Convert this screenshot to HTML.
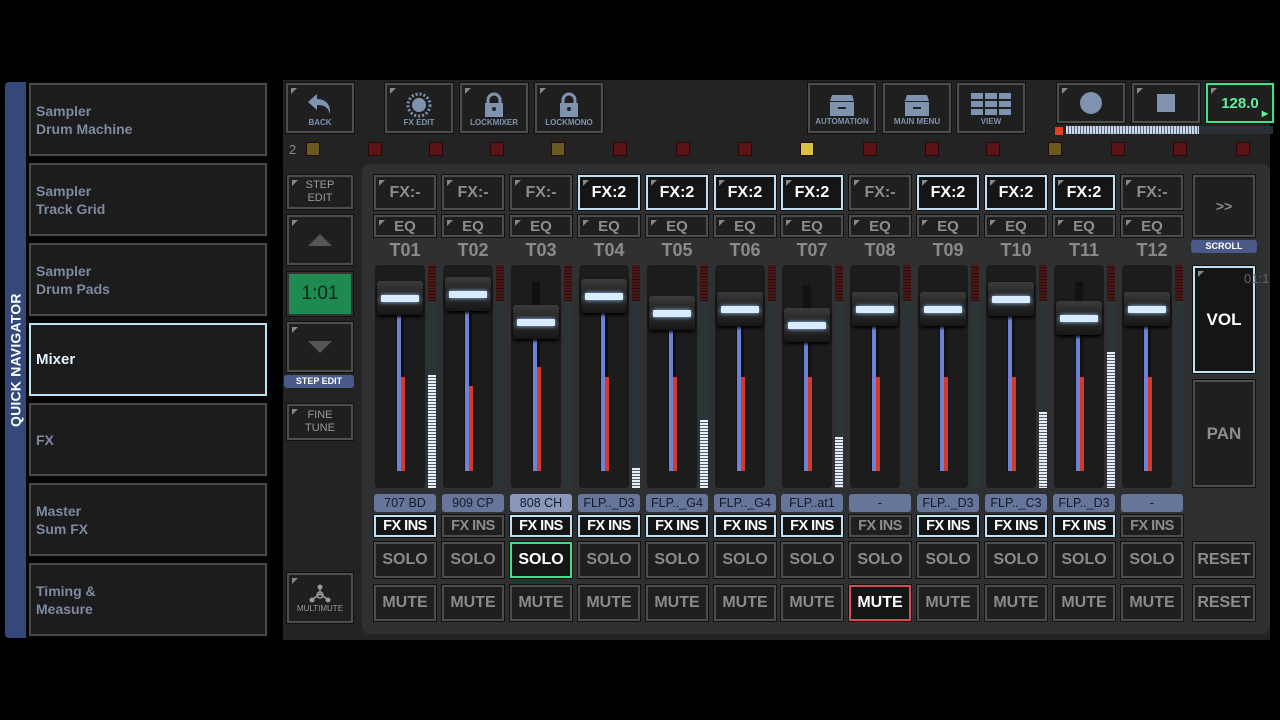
<!DOCTYPE html>
<html><head><meta charset="utf-8"><style>
*{box-sizing:border-box;margin:0;padding:0}
body{width:1280px;height:720px;background:#000;position:relative;overflow:hidden;font-family:"Liberation Sans",sans-serif;font-weight:bold}
.a{position:absolute}
.side{left:5px;top:82px;width:265px;height:556px;background:#050505;border-radius:4px 0 0 4px}
.strip{left:5px;top:82px;width:21px;height:556px;background:#34497a;border-radius:4px 0 0 4px}
.qn{left:5px;top:260px;width:21px;height:200px;color:#fff;font-size:14px;writing-mode:vertical-rl;transform:rotate(180deg);display:flex;align-items:center;justify-content:center;letter-spacing:0.2px}
.nav{left:29px;width:238px;height:73px;background:#1c1c1c;border:2px solid #4a4a4a;color:#7d8aa0;font-size:14px;padding-left:5px;display:flex;align-items:center;line-height:18px}
.nav.on{border-color:#bfe0f0;color:#e6f4ff;font-size:15px}
.main{left:283px;top:80px;width:987px;height:560px;background:#232323}
.inner{left:362px;top:164px;width:908px;height:470px;background:#2f3031;border-radius:8px}
.b{position:absolute;background:#1f1f1f;border:2px solid #4d4d4d;color:#8d8d8d;display:flex;align-items:center;justify-content:center;text-align:center;box-shadow:0 0 0 1px #111}
.b::before{content:"";position:absolute;left:3px;top:3px;border-left:6px solid #888;border-bottom:6px solid transparent}
.nb::before{display:none}
.tb{top:83px;height:50px;width:68px;flex-direction:column;font-size:8px;color:#7f93b0;padding-top:2px}
.col{position:absolute;top:0;width:62px;height:720px}
.col>*{position:absolute}
.fx{top:175px;left:0;width:62px;height:35px;font-size:16px}
.fx.on{border-color:#bfe0f0;color:#fff;background:#151515}
.eq{top:215px;left:0;width:62px;height:22px;font-size:15px}
.lbl{top:240px;left:0;width:62px;text-align:center;color:#8a8a8a;font-size:18px;font-weight:bold}
.fb{top:265px;left:1px;width:50px;height:223px;background:#1c1c1c;border-radius:4px}
.mt{top:265px;left:54px;width:8px;height:223px;background:#2b3538}
.mt::before{content:"";position:absolute;left:0;top:0;width:8px;height:36px;background:repeating-linear-gradient(#4a1616 0 2px,#2a1010 2px 3px)}
.mf{left:54px;width:8px;background:repeating-linear-gradient(#e6eef8 0 2px,#55606a 2px 3px);bottom:232px}
.tr{left:22px;width:8px;top:calc(var(--c) + 17px);height:calc(471px - var(--c) - 17px);background:#111;border-radius:3px}
.tr::before{content:"";position:absolute;left:1px;top:0;width:4px;bottom:0;background:#6f82d8}
.rd{left:27px;width:4px;top:377px;height:94px;background:#d33a2a}
.cap{left:3px;width:46px;top:calc(var(--c) - 17px);height:34px;background:linear-gradient(#3c3c3c,#202020 45%,#2c2c2c 55%,#161616);border-radius:3px;box-shadow:0 2px 3px #000}
.cap::after{content:"";position:absolute;left:4px;right:4px;top:14px;height:7px;background:#d8ecff;box-shadow:0 0 4px #9cc8ff;border-radius:1px}
.nm{top:494px;left:0;width:62px;height:18px;background:#66759a;color:#141a28;font-size:12.5px;font-weight:normal;display:flex;align-items:center;justify-content:center;border-radius:3px}
.fi{top:515px;left:0;width:62px;height:22px;font-size:14.5px;letter-spacing:-0.5px}
.fi.on{border-color:#bfe0f0;color:#fff;background:#151515}
.so{top:542px;left:0;width:62px;height:36px;font-size:16px;color:#8a8a8a}
.mu{top:585px;left:0;width:62px;height:36px;font-size:16px;color:#8a8a8a}
.ic{position:absolute;top:142px;width:14px;height:14px;background:#5a1418;border:1px solid #2a0808}
.ic.y{background:#6a5a20}
.ic.g{background:#d8c040}
</style></head><body>
<div class="a side"></div><div class="a strip"></div>
<div class="a qn">QUICK NAVIGATOR</div>
<div class="a nav" style="top:83px">Sampler<br>Drum Machine</div>
<div class="a nav" style="top:163px">Sampler<br>Track Grid</div>
<div class="a nav" style="top:243px">Sampler<br>Drum Pads</div>
<div class="a nav on" style="top:323px">Mixer</div>
<div class="a nav" style="top:403px">FX</div>
<div class="a nav" style="top:483px">Master<br>Sum FX</div>
<div class="a nav" style="top:563px">Timing &amp;<br>Measure</div>

<div class="a main"></div>
<div class="a inner"></div>

<div class="b tb" style="left:286px;width:68px"><svg width="28" height="26" viewBox="0 0 28 26"><path d="M11 2 L2 10 L11 18 V13 C18 13 22 15 24 22 C25 13 20 7 11 7 Z" fill="#7f93b0"/></svg>BACK</div>
<div class="b tb" style="left:385px"><svg width="28" height="26" viewBox="0 0 28 26"><circle cx="14" cy="13" r="7" fill="#7f93b0"/><circle cx="14" cy="13" r="11" fill="none" stroke="#7f93b0" stroke-width="3" stroke-dasharray="2 2"/></svg>FX EDIT</div>
<div class="b tb" style="left:460px"><svg width="24" height="26" viewBox="0 0 24 26"><path d="M6 12 V8 a6 6 0 0 1 12 0 V12" fill="none" stroke="#7f93b0" stroke-width="3"/><rect x="3" y="11" width="18" height="14" fill="#7f93b0"/><circle cx="12" cy="17" r="2" fill="#222"/></svg>LOCKMIXER</div>
<div class="b tb" style="left:535px"><svg width="24" height="26" viewBox="0 0 24 26"><path d="M6 12 V8 a6 6 0 0 1 12 0 V12" fill="none" stroke="#7f93b0" stroke-width="3"/><rect x="3" y="11" width="18" height="14" fill="#7f93b0"/><circle cx="12" cy="17" r="2" fill="#222"/></svg>LOCKMONO</div>
<div class="b tb nb" style="left:808px"><svg width="28" height="24" viewBox="0 0 28 24"><path d="M4 2 H24 L26 8 H2 Z" fill="#7f93b0"/><rect x="2" y="9" width="24" height="14" fill="#7f93b0"/><rect x="10" y="14" width="8" height="2" fill="#222"/></svg>AUTOMATION</div>
<div class="b tb nb" style="left:883px"><svg width="28" height="24" viewBox="0 0 28 24"><path d="M4 2 H24 L26 8 H2 Z" fill="#7f93b0"/><rect x="2" y="9" width="24" height="14" fill="#7f93b0"/><rect x="10" y="14" width="8" height="2" fill="#222"/></svg>MAIN MENU</div>
<div class="b tb nb" style="left:957px"><svg width="40" height="24" viewBox="0 0 40 24"><g fill="#7f93b0"><rect x="0" y="0" width="12" height="6"/><rect x="14" y="0" width="12" height="6"/><rect x="28" y="0" width="12" height="6"/><rect x="0" y="8" width="12" height="6"/><rect x="14" y="8" width="12" height="6"/><rect x="28" y="8" width="12" height="6"/><rect x="0" y="16" width="12" height="6"/><rect x="14" y="16" width="12" height="6"/><rect x="28" y="16" width="12" height="6"/></g></svg>VIEW</div>
<div class="b" style="left:1057px;top:83px;width:68px;height:40px"><div style="width:22px;height:22px;border-radius:50%;background:#7f93b0"></div></div>
<div class="b" style="left:1132px;top:83px;width:68px;height:40px"><div style="width:18px;height:18px;background:#7f93b0"></div></div>
<div class="b" style="left:1206px;top:83px;width:68px;height:40px;border-color:#3fe08a;color:#5ff0a0;font-size:15px">128.0<span style="position:absolute;right:4px;bottom:3px;font-size:8px">▶</span></div>
<div class="a" style="left:1055px;top:127px;width:8px;height:8px;background:#e04020"></div>
<div class="a" style="left:1066px;top:126px;width:133px;height:8px;background:repeating-linear-gradient(90deg,#c8d8ea 0 2px,#5a6a80 2px 3px)"></div>
<div class="a" style="left:1199px;top:126px;width:74px;height:8px;background:#2a3036"></div>

<div class="a" style="left:289px;top:142px;color:#8a8a8a;font-size:13px;font-weight:normal">2</div>
<div class="ic y" style="left:306px"></div><div class="ic" style="left:368px"></div><div class="ic" style="left:429px"></div><div class="ic" style="left:490px"></div><div class="ic y" style="left:551px"></div><div class="ic" style="left:613px"></div><div class="ic" style="left:676px"></div><div class="ic" style="left:738px"></div><div class="ic g" style="left:800px"></div><div class="ic" style="left:863px"></div><div class="ic" style="left:925px"></div><div class="ic" style="left:986px"></div><div class="ic y" style="left:1048px"></div><div class="ic" style="left:1111px"></div><div class="ic" style="left:1173px"></div><div class="ic" style="left:1236px"></div>

<div class="b" style="left:287px;top:175px;width:66px;height:34px;font-size:11px;font-weight:normal;line-height:13px;color:#9a9a9a">STEP<br>EDIT</div>
<div class="b" style="left:287px;top:215px;width:66px;height:50px"><div style="border-left:12px solid transparent;border-right:12px solid transparent;border-bottom:12px solid #555"></div></div>
<div class="b nb" style="left:287px;top:272px;width:66px;height:44px;background:#1e8a50;border-color:#333;color:#0c2a18;font-size:19px;font-weight:normal">1:01</div>
<div class="b" style="left:287px;top:322px;width:66px;height:50px"><div style="border-left:12px solid transparent;border-right:12px solid transparent;border-top:12px solid #555"></div></div>
<div class="a" style="left:284px;top:375px;width:70px;height:13px;background:#4a5a88;color:#fff;font-size:9px;text-align:center;line-height:13px;border-radius:3px">STEP EDIT</div>
<div class="b" style="left:287px;top:404px;width:66px;height:36px;font-size:11px;font-weight:normal;line-height:13px;color:#9a9a9a">FINE<br>TUNE</div>
<div class="b" style="left:287px;top:573px;width:66px;height:50px;flex-direction:column;font-size:8px;font-weight:normal;color:#9a9a9a"><svg width="22" height="20" viewBox="0 0 22 20"><g fill="#9a9a9a"><circle cx="11" cy="3" r="2.5"/><circle cx="3" cy="16" r="2.5"/><circle cx="19" cy="16" r="2.5"/></g><path d="M11 5 V10 M11 10 L4 15 M11 10 L18 15" stroke="#9a9a9a" stroke-width="1.5" fill="none"/><circle cx="11" cy="11" r="3" fill="none" stroke="#9a9a9a" stroke-width="1.5"/></svg>MULTIMUTE</div>

<div class="b nb" style="left:1193px;top:175px;width:62px;height:62px;font-size:14px;color:#8a8a8a">&gt;&gt;</div>
<div class="a" style="left:1191px;top:240px;width:66px;height:13px;background:#4a5a88;color:#fff;font-size:9px;text-align:center;line-height:13px;border-radius:3px">SCROLL</div>
<div class="b" style="left:1193px;top:266px;width:62px;height:107px;border-color:#bfe0f0;color:#fff;font-size:17px;background:#151515">VOL</div>
<div class="b nb" style="left:1193px;top:380px;width:62px;height:107px;font-size:17px">PAN</div>
<div class="b nb" style="left:1193px;top:542px;width:62px;height:36px;font-size:16px">RESET</div>
<div class="b nb" style="left:1193px;top:585px;width:62px;height:36px;font-size:16px">RESET</div>
<div class="a" style="left:1244px;top:271px;color:#666;font-size:13px;font-weight:normal">01:1</div>

<div class="col" style="left:374px;--c:298px"><div class="b fx">FX:-</div><div class="b eq">EQ</div><div class="lbl">T01</div><div class="fb"></div><div class="mt"></div><div class="mf" style="top:375px"></div><div class="tr"></div><div class="rd"></div><div class="cap"></div><div class="nm">707 BD</div><div class="b nb fi on">FX INS</div><div class="b nb so">SOLO</div><div class="b nb mu">MUTE</div></div>
<div class="col" style="left:442px;--c:294px"><div class="b fx">FX:-</div><div class="b eq">EQ</div><div class="lbl">T02</div><div class="fb"></div><div class="mt"></div><div class="tr"></div><div class="rd" style="top:386px;height:85px"></div><div class="cap"></div><div class="nm">909 CP</div><div class="b nb fi">FX INS</div><div class="b nb so">SOLO</div><div class="b nb mu">MUTE</div></div>
<div class="col" style="left:510px;--c:322px"><div class="b fx">FX:-</div><div class="b eq">EQ</div><div class="lbl">T03</div><div class="fb"></div><div class="mt"></div><div class="a" style="left:22px;top:282px;width:8px;height:25px;background:#111"></div><div class="tr"></div><div class="rd" style="top:367px;height:104px"></div><div class="cap"></div><div class="nm" style="background:#8a98bc">808 CH</div><div class="b nb fi on">FX INS</div><div class="b nb so" style="border-color:#3fe08a;color:#fff;background:#151515">SOLO</div><div class="b nb mu">MUTE</div></div>
<div class="col" style="left:578px;--c:296px"><div class="b fx on">FX:2</div><div class="b eq">EQ</div><div class="lbl">T04</div><div class="fb"></div><div class="mt"></div><div class="mf" style="top:468px"></div><div class="tr"></div><div class="rd"></div><div class="cap"></div><div class="nm">FLP.._D3</div><div class="b nb fi on">FX INS</div><div class="b nb so">SOLO</div><div class="b nb mu">MUTE</div></div>
<div class="col" style="left:646px;--c:313px"><div class="b fx on">FX:2</div><div class="b eq">EQ</div><div class="lbl">T05</div><div class="fb"></div><div class="mt"></div><div class="mf" style="top:420px"></div><div class="tr"></div><div class="rd"></div><div class="cap"></div><div class="nm">FLP.._G4</div><div class="b nb fi on">FX INS</div><div class="b nb so">SOLO</div><div class="b nb mu">MUTE</div></div>
<div class="col" style="left:714px;--c:309px"><div class="b fx on">FX:2</div><div class="b eq">EQ</div><div class="lbl">T06</div><div class="fb"></div><div class="mt"></div><div class="tr"></div><div class="rd"></div><div class="cap"></div><div class="nm">FLP.._G4</div><div class="b nb fi on">FX INS</div><div class="b nb so">SOLO</div><div class="b nb mu">MUTE</div></div>
<div class="col" style="left:781px;--c:325px"><div class="b fx on">FX:2</div><div class="b eq">EQ</div><div class="lbl">T07</div><div class="fb"></div><div class="mt"></div><div class="mf" style="top:437px"></div><div class="a" style="left:22px;top:285px;width:8px;height:25px;background:#111"></div><div class="tr"></div><div class="rd"></div><div class="cap"></div><div class="nm">FLP..at1</div><div class="b nb fi on">FX INS</div><div class="b nb so">SOLO</div><div class="b nb mu">MUTE</div></div>
<div class="col" style="left:849px;--c:309px"><div class="b fx">FX:-</div><div class="b eq">EQ</div><div class="lbl">T08</div><div class="fb"></div><div class="mt"></div><div class="tr"></div><div class="rd"></div><div class="cap"></div><div class="nm">-</div><div class="b nb fi">FX INS</div><div class="b nb so">SOLO</div><div class="b nb mu" style="border-color:#d8485a;color:#fff;background:#151515">MUTE</div></div>
<div class="col" style="left:917px;--c:309px"><div class="b fx on">FX:2</div><div class="b eq">EQ</div><div class="lbl">T09</div><div class="fb"></div><div class="mt"></div><div class="tr"></div><div class="rd"></div><div class="cap"></div><div class="nm">FLP.._D3</div><div class="b nb fi on">FX INS</div><div class="b nb so">SOLO</div><div class="b nb mu">MUTE</div></div>
<div class="col" style="left:985px;--c:299px"><div class="b fx on">FX:2</div><div class="b eq">EQ</div><div class="lbl">T10</div><div class="fb"></div><div class="mt"></div><div class="mf" style="top:412px"></div><div class="tr"></div><div class="rd"></div><div class="cap"></div><div class="nm">FLP.._C3</div><div class="b nb fi on">FX INS</div><div class="b nb so">SOLO</div><div class="b nb mu">MUTE</div></div>
<div class="col" style="left:1053px;--c:318px"><div class="b fx on">FX:2</div><div class="b eq">EQ</div><div class="lbl">T11</div><div class="fb"></div><div class="mt"></div><div class="mf" style="top:352px"></div><div class="a" style="left:22px;top:282px;width:8px;height:25px;background:#111"></div><div class="tr"></div><div class="rd"></div><div class="cap"></div><div class="nm">FLP.._D3</div><div class="b nb fi on">FX INS</div><div class="b nb so">SOLO</div><div class="b nb mu">MUTE</div></div>
<div class="col" style="left:1121px;--c:309px"><div class="b fx">FX:-</div><div class="b eq">EQ</div><div class="lbl">T12</div><div class="fb"></div><div class="mt"></div><div class="tr"></div><div class="rd"></div><div class="cap"></div><div class="nm">-</div><div class="b nb fi">FX INS</div><div class="b nb so">SOLO</div><div class="b nb mu">MUTE</div></div>
</body></html>
